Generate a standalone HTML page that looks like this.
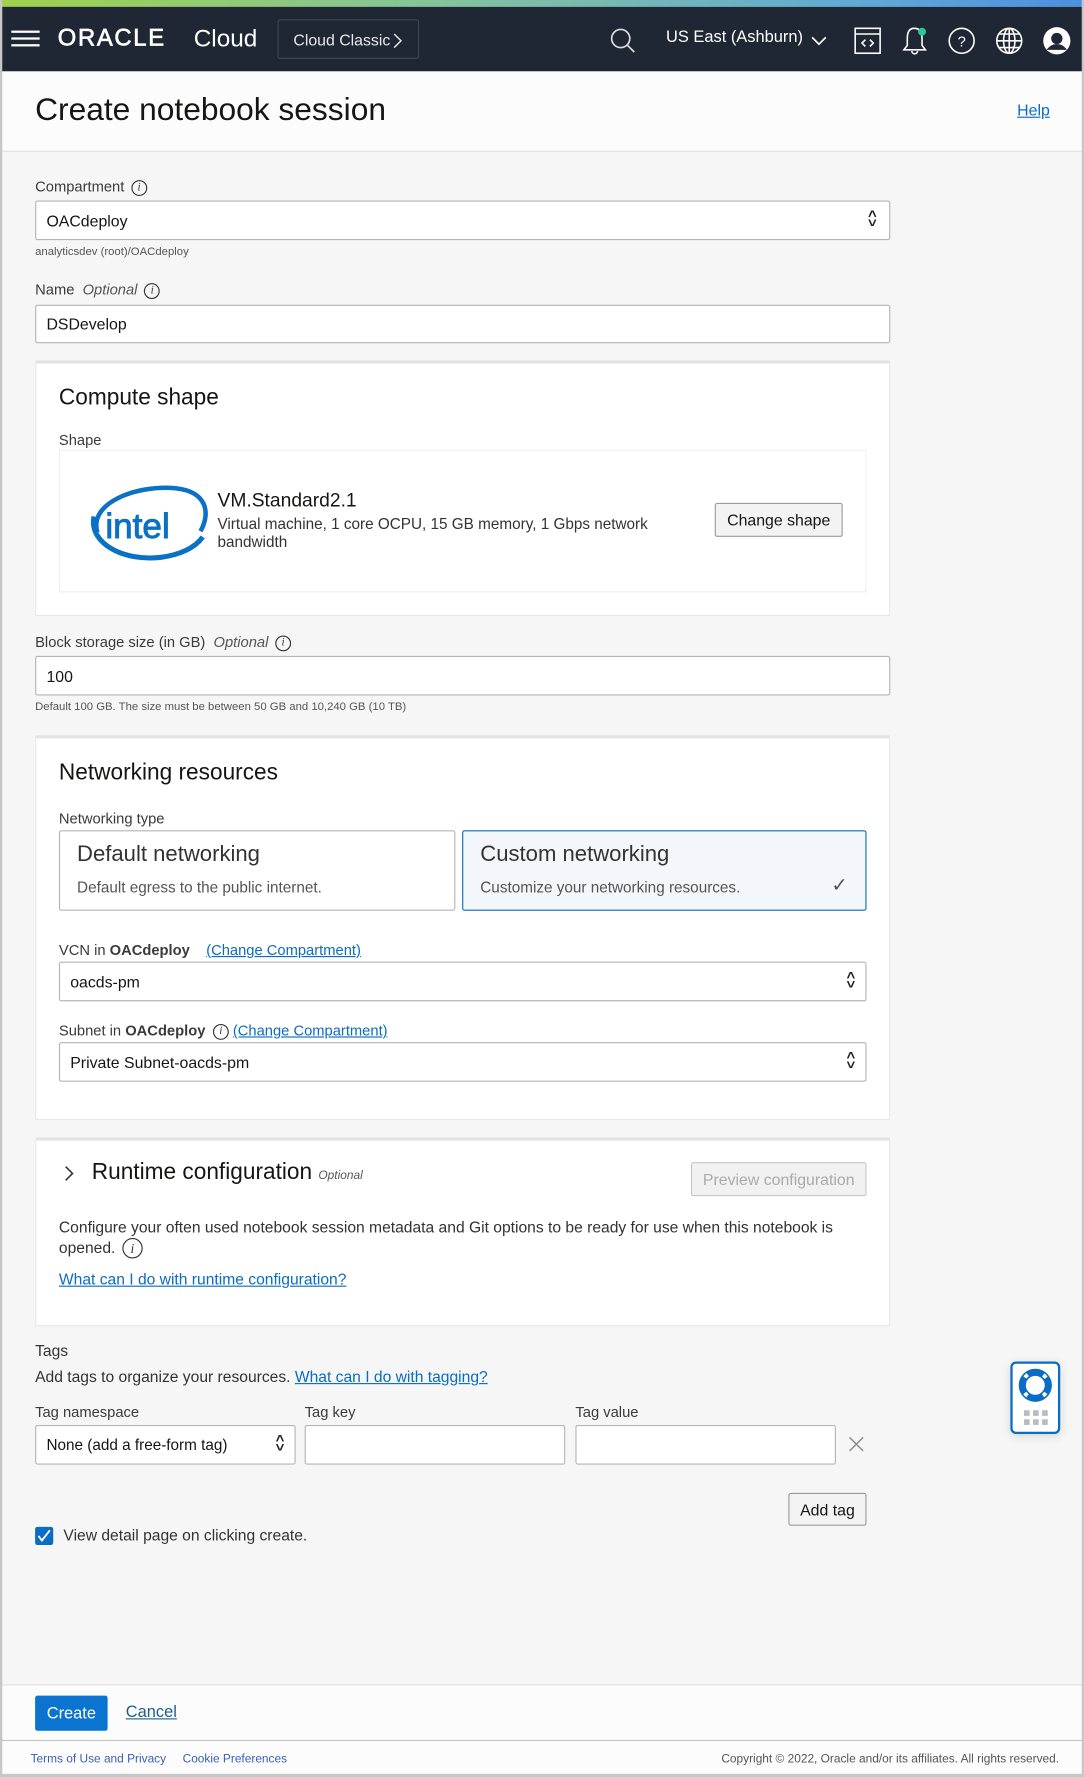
<!DOCTYPE html>
<html><head><meta charset="utf-8">
<style>
*{box-sizing:border-box;margin:0;padding:0}
html,body{width:1084px;height:1777px;overflow:hidden;background:#f6f6f6}
body{font-family:"Liberation Sans",Arial,sans-serif;color:#161513}
#w{position:absolute;left:0;top:0;width:957px;height:1569px;transform:scale(1.13271);transform-origin:0 0;background:#f6f6f6;overflow:hidden}
.a{position:absolute}
.grad{left:0;top:0;width:957px;height:6px;background:linear-gradient(90deg,#9fd24a,#84c49a 40%,#5fa9d6 80%,#4a90e2)}
.hdr{left:0;top:6px;width:957px;height:57px;background:#1e2733}
.tb{left:0;top:63px;width:957px;height:71px;background:#fcfcfc;border-bottom:1px solid #e0e0e0}
.lbl{font-size:13px;color:#3a3a3a}
.inp{background:#fff;border:1px solid #b5b5b5;border-radius:2px;font-size:14px;padding-left:9px;display:flex;align-items:center;color:#161513}
.help{font-size:10px;color:#555}
.card{background:#fff;border:1px solid #e6e6e6;border-top:3px solid #e3e3e6;border-radius:2px}
.h2{font-size:20px;color:#161513}
.info{display:inline-block;width:14px;height:14px;border:1px solid #333;border-radius:50%;font-size:10px;font-style:italic;text-align:center;line-height:12px;font-family:"Liberation Serif",serif;vertical-align:middle;margin-left:6px}
.lnk{color:#0a6cc2;text-decoration:underline}
.arr{font-size:11px;line-height:8px;color:#222;font-weight:bold;transform:scaleX(1.2)}
.btn{background:#f3f3f3;border:1px solid #9c9c9c;border-radius:2px;font-size:14px;display:flex;align-items:center;justify-content:center;color:#161513}
</style></head><body><div id="w">
<div class="a grad"></div>
<div class="a hdr">
  <div class="a" style="left:10px;top:21px;width:25px;height:2px;background:#fff;box-shadow:0 6px 0 #fff,0 12px 0 #fff"></div>
  <div class="a" style="left:51px;top:16px;color:#fff;font-size:21px;letter-spacing:1.5px;-webkit-text-stroke:0.6px #fff">ORACLE</div>
  <div class="a" style="left:171px;top:16px;color:#fff;font-size:21.5px">Cloud</div>
  <div class="a" style="left:245px;top:11px;width:125px;height:35px;border:1px solid #3c4652;border-radius:2px;color:#e8e8e8;font-size:14px;padding:9px 0 0 13px">Cloud Classic</div>
  <svg class="a" style="left:346px;top:22px" width="10" height="16" viewBox="0 0 10 16" fill="none" stroke="#e8e8e8" stroke-width="1.3"><path d="M2 2l6 6-6 6"/></svg>
  <svg class="a" style="left:538px;top:18px" width="24" height="24" viewBox="0 0 24 24" fill="none" stroke="#ddd" stroke-width="1.5"><circle cx="10" cy="10" r="8"/><path d="M16 16l6 6"/></svg>
  <div class="a" style="left:588px;top:19px;color:#fff;font-size:14.5px">US East (Ashburn)</div>
  <svg class="a" style="left:715px;top:24px" width="16" height="12" viewBox="0 0 16 12" fill="none" stroke="#fff" stroke-width="1.5"><path d="M2 3l6 6 6-6"/></svg>
  <svg class="a" style="left:753px;top:17px" width="26" height="26" viewBox="0 0 26 26" fill="none" stroke="#fff" stroke-width="1.4"><rect x="2" y="2" width="22" height="22"/><path d="M2 7h22M11 12l-3 3 3 3M15 12l3 3-3 3"/></svg>
  <svg class="a" style="left:795px;top:15px" width="26" height="30" viewBox="0 0 26 30" fill="none" stroke="#fff" stroke-width="1.4"><path d="M12 4c-5 0-6 5-6 9v6l-3 4h19l-3-4v-6c0-4-1-9-7-9zM10 24a2.5 2.5 0 005 0"/><circle cx="19" cy="7" r="3.5" fill="#2bc5a0" stroke="none"/></svg>
  <svg class="a" style="left:836px;top:17px" width="26" height="26" viewBox="0 0 26 26" fill="none" stroke="#fff" stroke-width="1.4"><circle cx="13" cy="13" r="11"/><text x="13" y="18" font-size="13" fill="#fff" stroke="none" text-anchor="middle" font-family="Liberation Sans">?</text></svg>
  <svg class="a" style="left:878px;top:17px" width="26" height="26" viewBox="0 0 26 26" fill="none" stroke="#fff" stroke-width="1.4"><circle cx="13" cy="13" r="11"/><ellipse cx="13" cy="13" rx="5" ry="11"/><path d="M2 13h22M4 7h18M4 19h18M13 2v22"/></svg>
  <svg class="a" style="left:920px;top:17px" width="26" height="26" viewBox="0 0 26 26"><circle cx="13" cy="13" r="12" fill="#fff"/><circle cx="13" cy="11" r="5" fill="#1e2733"/><path d="M4 21c3-4 6-5 9-5s6 1 9 5" fill="#1e2733"/></svg>
</div>
<div class="a tb">
  <div class="a" style="left:31px;top:18px;font-size:28px;color:#161513">Create notebook session</div>
  <div class="a lnk" style="left:898px;top:26px;font-size:14px">Help</div>
</div>

<div class="a lbl" style="left:31px;top:157px">Compartment<span class="info">i</span></div>
<div class="a inp" style="left:31px;top:177px;width:755px;height:35px">OACdeploy</div>
<div class="a arr" style="left:767px;top:186px">&#x2C4;<br>&#x2C5;</div>
<div class="a help" style="left:31px;top:217px">analyticsdev (root)/OACdeploy</div>

<div class="a lbl" style="left:31px;top:248px">Name&nbsp; <i style="color:#555">Optional</i><span class="info">i</span></div>
<div class="a inp" style="left:31px;top:269px;width:755px;height:34px">DSDevelop</div>

<div class="a card" style="left:31px;top:318px;width:755px;height:226px">
  <div class="a h2" style="left:20px;top:19px">Compute shape</div>
  <div class="a lbl" style="left:20px;top:60px">Shape</div>
  <div class="a" style="left:20px;top:76px;width:713px;height:126px;border:1px solid #efefef"></div>
  <svg class="a" style="left:48px;top:105px" width="106" height="72" viewBox="0 0 106 72"><path d="M6 44C-2 18 40 2 75 5c28 3 31 22 22 38" fill="none" stroke="#0a71c5" stroke-width="4"/><path d="M3 30C-2 54 30 70 62 66c16-2 30-8 37-18" fill="none" stroke="#0a71c5" stroke-width="4.5"/><text x="13" y="49" font-family="Liberation Sans" font-size="31" fill="#0a71c5" stroke="#0a71c5" stroke-width="0.8">intel</text></svg>
  <div class="a" style="left:160px;top:111px;font-size:17px">VM.Standard2.1</div>
  <div class="a" style="left:160px;top:134px;font-size:13.5px;color:#333;line-height:16px;width:420px">Virtual machine, 1 core OCPU, 15 GB memory, 1 Gbps network bandwidth</div>
  <div class="a btn" style="left:599px;top:123px;width:113px;height:30px">Change shape</div>
</div>

<div class="a lbl" style="left:31px;top:559px">Block storage size (in GB)&nbsp; <i style="color:#555">Optional</i><span class="info">i</span></div>
<div class="a inp" style="left:31px;top:579px;width:755px;height:35px">100</div>
<div class="a help" style="left:31px;top:619px">Default 100 GB. The size must be between 50 GB and 10,240 GB (10 TB)</div>

<div class="a card" style="left:31px;top:649px;width:755px;height:340px">
  <div class="a h2" style="left:20px;top:19px">Networking resources</div>
  <div class="a lbl" style="left:20px;top:63px">Networking type</div>
  <div class="a" style="left:20px;top:81px;width:350px;height:71px;border:1px solid #b5b5b5;border-radius:2px">
    <div class="a" style="left:15px;top:9px;font-size:19.5px;color:#333">Default networking</div>
    <div class="a" style="left:15px;top:42px;font-size:13.5px;color:#555">Default egress to the public internet.</div>
  </div>
  <div class="a" style="left:376px;top:81px;width:357px;height:71px;border:1px solid #0a6cc2;border-radius:2px;background:#f3f6fb">
    <div class="a" style="left:15px;top:9px;font-size:19.5px;color:#333">Custom networking</div>
    <div class="a" style="left:15px;top:42px;font-size:13.5px;color:#555">Customize your networking resources.</div>
    <div class="a" style="left:325px;top:38px;font-size:17px;color:#555">&#x2713;</div>
  </div>
  <div class="a lbl" style="left:20px;top:179px">VCN in <b>OACdeploy</b>&nbsp;&nbsp;&nbsp; <span class="lnk">(Change Compartment)</span></div>
  <div class="a inp" style="left:20px;top:197px;width:713px;height:35px">oacds-pm</div>
  <div class="a arr" style="left:716px;top:206px">&#x2C4;<br>&#x2C5;</div>
  <div class="a lbl" style="left:20px;top:250px">Subnet in <b>OACdeploy</b> <span class="info" style="margin-left:3px">i</span> <span class="lnk">(Change Compartment)</span></div>
  <div class="a inp" style="left:20px;top:268px;width:713px;height:35px">Private Subnet-oacds-pm</div>
  <div class="a arr" style="left:716px;top:277px">&#x2C4;<br>&#x2C5;</div>
</div>

<div class="a card" style="left:31px;top:1004px;width:755px;height:167px">
  <svg class="a" style="left:24px;top:21px" width="10" height="16" viewBox="0 0 10 16" fill="none" stroke="#333" stroke-width="1.4"><path d="M2 2l6 6-6 6"/></svg>
  <div class="a h2" style="left:49px;top:17px">Runtime configuration <i style="font-size:10.5px;color:#555">Optional</i></div>
  <div class="a btn" style="left:578px;top:19px;width:155px;height:30px;color:#aaa;border-color:#c8c8c8;background:#f1f1f1">Preview configuration</div>
  <div class="a" style="left:20px;top:68px;font-size:13.8px;color:#333;line-height:18px;width:715px">Configure your often used notebook session metadata and Git options to be ready for use when this notebook is opened.<span class="info" style="width:18px;height:18px;line-height:16px;font-size:12px">i</span></div>
  <div class="a lnk" style="left:20px;top:115px;font-size:13.8px">What can I do with runtime configuration?</div>
</div>

<div class="a" style="left:31px;top:1185px;font-size:13.8px;color:#333">Tags</div>
<div class="a" style="left:31px;top:1208px;font-size:13.8px;color:#333">Add tags to organize your resources. <span class="lnk">What can I do with tagging?</span></div>
<div class="a lbl" style="left:31px;top:1239px">Tag namespace</div>
<div class="a lbl" style="left:269px;top:1239px">Tag key</div>
<div class="a lbl" style="left:508px;top:1239px">Tag value</div>
<div class="a inp" style="left:31px;top:1258px;width:230px;height:35px;font-size:13.5px">None (add a free-form tag)</div>
<div class="a arr" style="left:244px;top:1267px">&#x2C4;<br>&#x2C5;</div>
<div class="a inp" style="left:269px;top:1258px;width:230px;height:35px"></div>
<div class="a inp" style="left:508px;top:1258px;width:230px;height:35px"></div>
<svg class="a" style="left:749px;top:1268px" width="14" height="14" viewBox="0 0 14 14" stroke="#888" stroke-width="1.2"><path d="M1 1l12 12M13 1L1 13"/></svg>
<div class="a btn" style="left:696px;top:1318px;width:69px;height:29px">Add tag</div>
<div class="a" style="left:31px;top:1348px;width:16px;height:16px;background:#0a6cc2;border-radius:2px"></div>
<svg class="a" style="left:33px;top:1350px" width="12" height="12" viewBox="0 0 12 12" fill="none" stroke="#fff" stroke-width="1.6"><path d="M1 6l3 4 7-9"/></svg>
<div class="a" style="left:56px;top:1348px;font-size:13.8px;color:#333">View detail page on clicking create.</div>

<div class="a" style="left:892px;top:1202px;width:44px;height:64px;background:#fff;border:2px solid #0a6cc2;border-radius:5px;box-shadow:0 2px 8px rgba(0,0,0,.12)">
  <svg class="a" style="left:5px;top:4px" width="30" height="30" viewBox="0 0 30 30"><circle cx="15" cy="15" r="11.5" fill="none" stroke="#0a6cc2" stroke-width="5"/><circle cx="15" cy="15" r="11.5" fill="none" stroke="#fff" stroke-width="3.5" stroke-dasharray="3.5 14.56" transform="rotate(36 15 15)"/><circle cx="15" cy="15" r="14" fill="none" stroke="#0a6cc2" stroke-width="1.3"/><circle cx="15" cy="15" r="9" fill="none" stroke="#0a6cc2" stroke-width="1.3"/></svg>
  <div class="a" style="left:10px;top:41px;width:5px;height:5px;background:#b6bcc4;box-shadow:8px 0 #b6bcc4,16px 0 #b6bcc4,0 8px #b6bcc4,8px 8px #b6bcc4,16px 8px #b6bcc4"></div>
</div>

<div class="a" style="left:0;top:1487px;width:957px;height:50px;background:#fcfcfc;border-top:1px solid #e0e0e0;border-bottom:1px solid #c7c7c7"></div>
<div class="a" style="left:31px;top:1497px;width:64px;height:31px;background:#0a74d0;border-radius:2px;color:#fff;font-size:14.5px;display:flex;align-items:center;justify-content:center">Create</div>
<div class="a lnk" style="left:111px;top:1504px;font-size:14.5px;color:#1f5f8b">Cancel</div>
<div class="a" style="left:0;top:1538px;width:957px;height:31px;background:#fcfcfc"></div>
<div class="a" style="left:27px;top:1547px;font-size:10.5px;color:#3b5fb5">Terms of Use and Privacy&nbsp;&nbsp;&nbsp;&nbsp; Cookie Preferences</div>
<div class="a" style="right:22px;top:1547px;font-size:10.5px;color:#555">Copyright © 2022, Oracle and/or its affiliates. All rights reserved.</div>
<div class="a" style="left:0;top:0;width:2px;height:1569px;background:#c7c7c7"></div>
<div class="a" style="left:955px;top:0;width:2px;height:1569px;background:#c7c7c7"></div>
<div class="a" style="left:0;top:1566px;width:957px;height:3px;background:#c7c7c7"></div>
</div></body></html>
